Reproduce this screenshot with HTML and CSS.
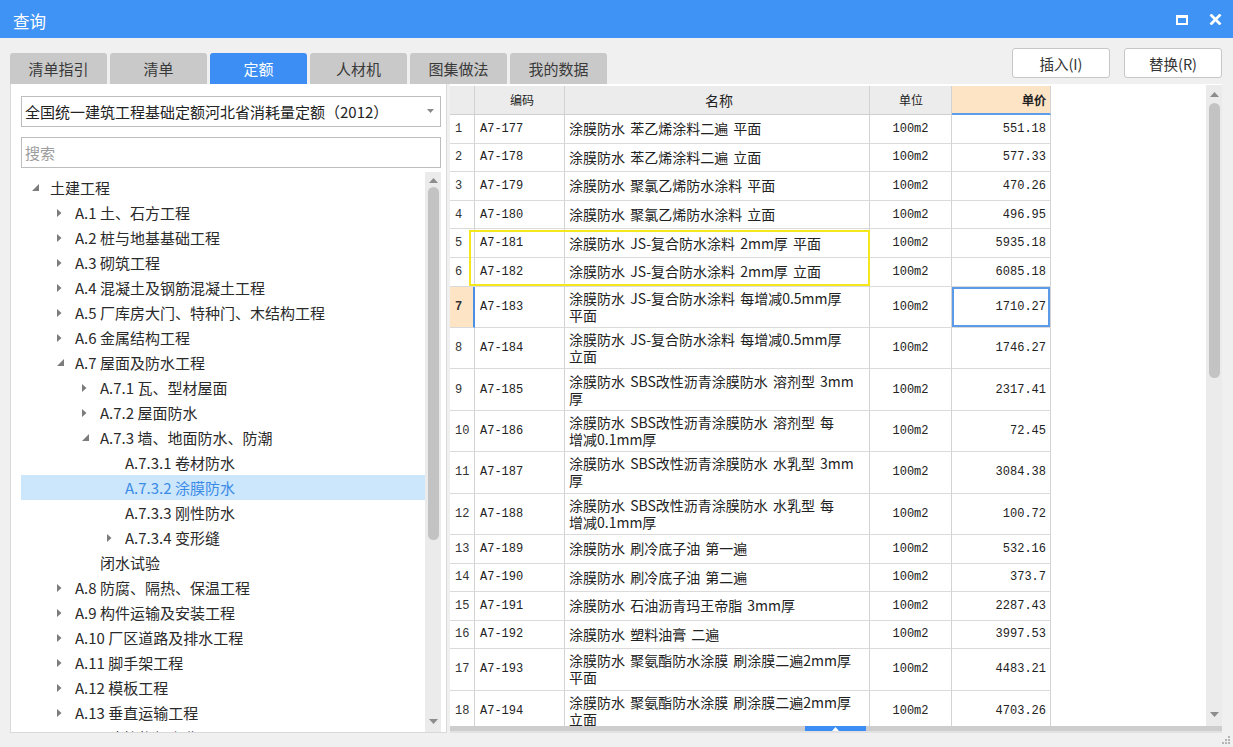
FILE: index.html
```html
<!DOCTYPE html>
<html lang="zh-CN">
<head>
<meta charset="utf-8">
<title>查询</title>
<link rel="stylesheet" href="styles.css">
</head>
<body>
<div class="window">
  <div class="titlebar">
    <span class="title">查询</span>
    <div class="win-btns">
      <svg class="win-max" width="12" height="10" viewBox="0 0 12 10"><rect x="1" y="1.5" width="10" height="7.5" fill="none" stroke="#fff" stroke-width="2"/><rect x="0" y="0" width="12" height="3" fill="#fff"/></svg>
      <svg class="win-close" width="13" height="11" viewBox="0 0 13 11"><path d="M1.5 0.5 L11.5 10.5 M11.5 0.5 L1.5 10.5" stroke="#fff" stroke-width="2.8" fill="none"/></svg>
    </div>
  </div>

  <div class="toolbar">
    <div class="tabs">
      <div class="tab">清单指引</div>
      <div class="tab">清单</div>
      <div class="tab active">定额</div>
      <div class="tab">人材机</div>
      <div class="tab">图集做法</div>
      <div class="tab">我的数据</div>
    </div>
    <div class="actions">
      <button class="btn">插入(I)</button>
      <button class="btn">替换(R)</button>
    </div>
  </div>

  <div class="main">
    <div class="left">
      <div class="select">
        <span class="select-text">全国统一建筑工程基础定额河北省消耗量定额（2012）</span>
        <svg class="caret" width="7" height="4" viewBox="0 0 7 4"><path d="M0 0 L7 0 L3.5 4Z" fill="#8a8a8a"/></svg>
      </div>
      <div class="search">搜索</div>
      <div class="tree-wrap">
        <div class="tree">
          <div class="node l0"><span class="tw"><svg width="7" height="7" viewBox="0 0 7 7"><path d="M7 0 L7 7 L0 7Z" fill="#7c7c7c"/></svg></span>土建工程</div>
          <div class="node l1"><span class="tw"><svg width="5" height="8" viewBox="0 0 5 8"><path d="M0 0 L4.5 4 L0 8Z" fill="#7c7c7c"/></svg></span>A.1 土、石方工程</div>
          <div class="node l1"><span class="tw"><svg width="5" height="8" viewBox="0 0 5 8"><path d="M0 0 L4.5 4 L0 8Z" fill="#7c7c7c"/></svg></span>A.2 桩与地基基础工程</div>
          <div class="node l1"><span class="tw"><svg width="5" height="8" viewBox="0 0 5 8"><path d="M0 0 L4.5 4 L0 8Z" fill="#7c7c7c"/></svg></span>A.3 砌筑工程</div>
          <div class="node l1"><span class="tw"><svg width="5" height="8" viewBox="0 0 5 8"><path d="M0 0 L4.5 4 L0 8Z" fill="#7c7c7c"/></svg></span>A.4 混凝土及钢筋混凝土工程</div>
          <div class="node l1"><span class="tw"><svg width="5" height="8" viewBox="0 0 5 8"><path d="M0 0 L4.5 4 L0 8Z" fill="#7c7c7c"/></svg></span>A.5 厂库房大门、特种门、木结构工程</div>
          <div class="node l1"><span class="tw"><svg width="5" height="8" viewBox="0 0 5 8"><path d="M0 0 L4.5 4 L0 8Z" fill="#7c7c7c"/></svg></span>A.6 金属结构工程</div>
          <div class="node l1"><span class="tw"><svg width="7" height="7" viewBox="0 0 7 7"><path d="M7 0 L7 7 L0 7Z" fill="#7c7c7c"/></svg></span>A.7 屋面及防水工程</div>
          <div class="node l2"><span class="tw"><svg width="5" height="8" viewBox="0 0 5 8"><path d="M0 0 L4.5 4 L0 8Z" fill="#7c7c7c"/></svg></span>A.7.1 瓦、型材屋面</div>
          <div class="node l2"><span class="tw"><svg width="5" height="8" viewBox="0 0 5 8"><path d="M0 0 L4.5 4 L0 8Z" fill="#7c7c7c"/></svg></span>A.7.2 屋面防水</div>
          <div class="node l2"><span class="tw"><svg width="7" height="7" viewBox="0 0 7 7"><path d="M7 0 L7 7 L0 7Z" fill="#7c7c7c"/></svg></span>A.7.3 墙、地面防水、防潮</div>
          <div class="node l3"><span class="tw"></span>A.7.3.1 卷材防水</div>
          <div class="node l3 selected"><span class="tw"></span>A.7.3.2 涂膜防水</div>
          <div class="node l3"><span class="tw"></span>A.7.3.3 刚性防水</div>
          <div class="node l3"><span class="tw"><svg width="5" height="8" viewBox="0 0 5 8"><path d="M0 0 L4.5 4 L0 8Z" fill="#7c7c7c"/></svg></span>A.7.3.4 变形缝</div>
          <div class="node l2"><span class="tw"></span>闭水试验</div>
          <div class="node l1"><span class="tw"><svg width="5" height="8" viewBox="0 0 5 8"><path d="M0 0 L4.5 4 L0 8Z" fill="#7c7c7c"/></svg></span>A.8 防腐、隔热、保温工程</div>
          <div class="node l1"><span class="tw"><svg width="5" height="8" viewBox="0 0 5 8"><path d="M0 0 L4.5 4 L0 8Z" fill="#7c7c7c"/></svg></span>A.9 构件运输及安装工程</div>
          <div class="node l1"><span class="tw"><svg width="5" height="8" viewBox="0 0 5 8"><path d="M0 0 L4.5 4 L0 8Z" fill="#7c7c7c"/></svg></span>A.10 厂区道路及排水工程</div>
          <div class="node l1"><span class="tw"><svg width="5" height="8" viewBox="0 0 5 8"><path d="M0 0 L4.5 4 L0 8Z" fill="#7c7c7c"/></svg></span>A.11 脚手架工程</div>
          <div class="node l1"><span class="tw"><svg width="5" height="8" viewBox="0 0 5 8"><path d="M0 0 L4.5 4 L0 8Z" fill="#7c7c7c"/></svg></span>A.12 模板工程</div>
          <div class="node l1"><span class="tw"><svg width="5" height="8" viewBox="0 0 5 8"><path d="M0 0 L4.5 4 L0 8Z" fill="#7c7c7c"/></svg></span>A.13 垂直运输工程</div>
          <div class="node l1"><span class="tw"><svg width="5" height="8" viewBox="0 0 5 8"><path d="M0 0 L4.5 4 L0 8Z" fill="#7c7c7c"/></svg></span>A.14 建筑物超高费</div>
        </div>
        <div class="vscroll tree-vs">
          <div class="arrow"><svg width="9" height="5" viewBox="0 0 9 5"><path d="M0 5 L4.5 0 L9 5Z" fill="#8c8c8c"/></svg></div>
          <div class="thumb"></div>
          <div class="spacer"></div>
          <div class="arrow"><svg width="9" height="5" viewBox="0 0 9 5"><path d="M0 0 L9 0 L4.5 5Z" fill="#8c8c8c"/></svg></div>
        </div>
      </div>
    </div>

    <div class="right">
      <div class="grid-area">
        <div class="grid">
          <div class="row head">
            <div class="c num"></div>
            <div class="c code">编码</div>
            <div class="c name">名称</div>
            <div class="c unit">单位</div>
            <div class="c price">单价</div>
          </div>
          <div class="row r1"><div class="c num">1</div><div class="c code">A7-177</div><div class="c name">涂膜防水 苯乙烯涂料二遍 平面</div><div class="c unit">100m2</div><div class="c price">551.18</div></div>
          <div class="row r1"><div class="c num">2</div><div class="c code">A7-178</div><div class="c name">涂膜防水 苯乙烯涂料二遍 立面</div><div class="c unit">100m2</div><div class="c price">577.33</div></div>
          <div class="row r1"><div class="c num">3</div><div class="c code">A7-179</div><div class="c name">涂膜防水 聚氯乙烯防水涂料 平面</div><div class="c unit">100m2</div><div class="c price">470.26</div></div>
          <div class="row r1"><div class="c num">4</div><div class="c code">A7-180</div><div class="c name">涂膜防水 聚氯乙烯防水涂料 立面</div><div class="c unit">100m2</div><div class="c price">496.95</div></div>
          <div class="row r1"><div class="c num">5</div><div class="c code">A7-181</div><div class="c name">涂膜防水 JS-复合防水涂料 2mm厚 平面</div><div class="c unit">100m2</div><div class="c price">5935.18</div></div>
          <div class="row r1"><div class="c num">6</div><div class="c code">A7-182</div><div class="c name">涂膜防水 JS-复合防水涂料 2mm厚 立面</div><div class="c unit">100m2</div><div class="c price">6085.18</div></div>
          <div class="row r2 current"><div class="c num">7</div><div class="c code">A7-183</div><div class="c name">涂膜防水 JS-复合防水涂料 每增减0.5mm厚<br>平面</div><div class="c unit">100m2</div><div class="c price focus">1710.27</div></div>
          <div class="row r2"><div class="c num">8</div><div class="c code">A7-184</div><div class="c name">涂膜防水 JS-复合防水涂料 每增减0.5mm厚<br>立面</div><div class="c unit">100m2</div><div class="c price">1746.27</div></div>
          <div class="row r2"><div class="c num">9</div><div class="c code">A7-185</div><div class="c name">涂膜防水 SBS改性沥青涂膜防水 溶剂型 3mm<br>厚</div><div class="c unit">100m2</div><div class="c price">2317.41</div></div>
          <div class="row r2"><div class="c num">10</div><div class="c code">A7-186</div><div class="c name">涂膜防水 SBS改性沥青涂膜防水 溶剂型 每<br>增减0.1mm厚</div><div class="c unit">100m2</div><div class="c price">72.45</div></div>
          <div class="row r2"><div class="c num">11</div><div class="c code">A7-187</div><div class="c name">涂膜防水 SBS改性沥青涂膜防水 水乳型 3mm<br>厚</div><div class="c unit">100m2</div><div class="c price">3084.38</div></div>
          <div class="row r2"><div class="c num">12</div><div class="c code">A7-188</div><div class="c name">涂膜防水 SBS改性沥青涂膜防水 水乳型 每<br>增减0.1mm厚</div><div class="c unit">100m2</div><div class="c price">100.72</div></div>
          <div class="row r1"><div class="c num">13</div><div class="c code">A7-189</div><div class="c name">涂膜防水 刷冷底子油 第一遍</div><div class="c unit">100m2</div><div class="c price">532.16</div></div>
          <div class="row r1"><div class="c num">14</div><div class="c code">A7-190</div><div class="c name">涂膜防水 刷冷底子油 第二遍</div><div class="c unit">100m2</div><div class="c price">373.7</div></div>
          <div class="row r1"><div class="c num">15</div><div class="c code">A7-191</div><div class="c name">涂膜防水 石油沥青玛王帝脂 3mm厚</div><div class="c unit">100m2</div><div class="c price">2287.43</div></div>
          <div class="row r1"><div class="c num">16</div><div class="c code">A7-192</div><div class="c name">涂膜防水 塑料油膏 二遍</div><div class="c unit">100m2</div><div class="c price">3997.53</div></div>
          <div class="row r2"><div class="c num">17</div><div class="c code">A7-193</div><div class="c name">涂膜防水 聚氨酯防水涂膜 刷涂膜二遍2mm厚<br>平面</div><div class="c unit">100m2</div><div class="c price">4483.21</div></div>
          <div class="row r2"><div class="c num">18</div><div class="c code">A7-194</div><div class="c name">涂膜防水 聚氨酯防水涂膜 刷涂膜二遍2mm厚<br>立面</div><div class="c unit">100m2</div><div class="c price">4703.26</div></div>
          <div class="mark"></div>
        </div>
        <div class="vscroll grid-vs">
          <div class="arrow"><svg width="9" height="5" viewBox="0 0 9 5"><path d="M0 5 L4.5 0 L9 5Z" fill="#8c8c8c"/></svg></div>
          <div class="thumb"></div>
          <div class="spacer"></div>
          <div class="arrow"><svg width="9" height="5" viewBox="0 0 9 5"><path d="M0 0 L9 0 L4.5 5Z" fill="#8c8c8c"/></svg></div>
        </div>
      </div>
      <div class="hbar"><div class="splitter"><svg width="7" height="4" viewBox="0 0 7 4"><path d="M0 4 L3.5 0 L7 4Z" fill="#fff"/></svg></div></div>
    </div>
  </div>

  <div class="statusbar">
    <svg class="grip" width="10" height="10" viewBox="0 0 10 10"><g fill="#b4b4b4"><rect x="7" y="1" width="2" height="2"/><rect x="4" y="4" width="2" height="2"/><rect x="7" y="4" width="2" height="2"/><rect x="1" y="7" width="2" height="2"/><rect x="4" y="7" width="2" height="2"/><rect x="7" y="7" width="2" height="2"/></g></svg>
  </div>
</div>
</body>
</html>
```

FILE: styles.css
```css
* { box-sizing: border-box; }
html, body {
  margin: 0;
  padding: 0;
}
body {
  width: 1233px;
  height: 747px;
  overflow: hidden;
  background: #f0f0f0;
  font-family: "Noto Sans CJK SC", "Noto Sans", sans-serif;
  color: #333;
}
.window {
  display: flex;
  flex-direction: column;
  height: 747px;
}

/* title bar */
.titlebar {
  height: 38px;
  flex: none;
  background: #3f93f5;
  display: flex;
  align-items: center;
  padding: 4px 11px 0 13px;
  color: #fff;
}
.title {
  flex: 1;
  font-size: 16.5px;
  line-height: 1;
}
.win-btns {
  display: flex;
  align-items: center;
  gap: 21px;
  margin-top: -3px;
}

/* tabs + actions */
.toolbar {
  height: 46px;
  flex: none;
  display: flex;
  align-items: flex-end;
  padding: 0 11px 0 10px;
}
.tabs {
  display: flex;
  gap: 3px;
}
.tab {
  width: 97px;
  height: 31px;
  background: #c9c9c9;
  border-radius: 3px 3px 0 0;
  display: flex;
  align-items: center;
  justify-content: center;
  font-size: 15px;
  color: #3a3a3a;
}
.tab.active {
  background: #3c8ef4;
  color: #fff;
}
.actions {
  margin-left: auto;
  align-self: flex-start;
  margin-top: 10px;
  display: flex;
  gap: 14px;
}
.btn {
  width: 98px;
  height: 30px;
  background: #fff;
  border: 1px solid #c6c6c6;
  border-radius: 3px;
  font-family: inherit;
  font-size: 14.5px;
  color: #333;
  padding: 0;
}

/* main area */
.main {
  height: 649px;
  flex: none;
  display: flex;
  gap: 3px;
  margin: 0 11px 0 10px;
}
.left {
  width: 437px;
  flex: none;
  background: #fff;
  border: 1px solid #d9d9d9;
  border-top: none;
  padding: 12px 5px 0 10px;
  display: flex;
  flex-direction: column;
}
.select, .search {
  height: 31px;
  flex: none;
  border: 1px solid #bdbdbd;
  display: flex;
  align-items: center;
  padding: 0 6px 0 3px;
  font-size: 15px;
}
.select-text {
  flex: 1;
  color: #222;
  white-space: nowrap;
}
.caret { margin-bottom: 1px; }
.search {
  margin-top: 10px;
  color: #9c9c9c;
}
.tree-wrap {
  margin-top: 4px;
  flex: 1;
  min-height: 0;
  display: flex;
  overflow: hidden;
}
.tree {
  flex: 1;
  padding-top: 3px;
  overflow: hidden;
}
.node {
  height: 25px;
  display: flex;
  align-items: center;
  font-size: 15px;
  color: #2a2a2a;
  white-space: nowrap;
}
.node.l0 { padding-left: 11px; }
.node.l1 { padding-left: 36px; }
.node.l2 { padding-left: 61px; }
.node.l3 { padding-left: 86px; }
.node.selected {
  background: #cce6fc;
  color: #3b8be6;
}
.tw {
  width: 18px;
  flex: none;
  display: flex;
  align-items: center;
}

/* scrollbars */
.vscroll {
  width: 16px;
  flex: none;
  background: #ebebeb;
  display: flex;
  flex-direction: column;
  align-items: center;
}
.vscroll .arrow {
  height: 14px;
  display: flex;
  align-items: center;
  justify-content: center;
  flex: none;
}
.vscroll .thumb {
  width: 11px;
  background: #c3c3c3;
  border-radius: 6px;
  flex: none;
}
.vscroll .spacer { flex: 1; }
.tree-vs { padding: 1px 0 4px; }
.tree-vs .thumb { height: 353px; }
.grid-vs { padding: 1px 0 4px; }
.grid-vs .arrow { height: 16px; }
.grid-vs .thumb { height: 275px; margin-top: 1px; }

/* grid */
.right {
  flex: 1;
  background: #fff;
  display: flex;
  flex-direction: column;
  padding-top: 1px;
}
.grid-area {
  flex: 1;
  min-height: 0;
  display: flex;
}
.grid {
  flex: 1;
  position: relative;
  overflow: hidden;
  padding-top: 1px;
}
.row {
  display: grid;
  grid-template-columns: 25px 90px 305px 82px 99px;
}
.row.r1 { height: 28.6px; }
.row.r2 { height: 41.4px; }
.row.head { height: 29px; }
.c {
  border-right: 1px solid #d3d3d3;
  border-bottom: 1px solid #dadada;
  display: flex;
  align-items: center;
  white-space: nowrap;
  overflow: hidden;
}
.head .c {
  background: #ececec;
  justify-content: center;
  font-size: 14.5px;
  color: #222;
  border-bottom-color: #cfcfcf;
}
.head .c.price {
  background: #fde4c5;
  font-weight: bold;
  border-bottom: 2px solid #5d9de9;
}
.c.num {
  font-family: "Liberation Mono", monospace;
  font-size: 12px;
  padding-left: 5px;
  color: #333;
}
.head .c.num { padding: 0; }
.c.code {
  font-family: "Liberation Mono", monospace;
  font-size: 12px;
  padding-left: 5px;
  color: #222;
}
.c.name {
  font-size: 14px;
  line-height: 17px;
  padding-left: 4px;
  color: #222;
  word-spacing: 2px;
}
.c.unit {
  font-family: "Liberation Mono", monospace;
  font-size: 12px;
  justify-content: center;
  color: #222;
}
.c.price {
  font-family: "Liberation Mono", monospace;
  font-size: 12px;
  justify-content: flex-end;
  padding-right: 4px;
  color: #222;
}
.current .c.num {
  background: #fde4c5;
  font-weight: bold;
  border-right: 2px solid #4a8fe6;
}
.c.focus {
  box-shadow: inset 0 0 0 2px #5a9ae8;
}
.mark {
  position: absolute;
  left: 19px;
  top: 145px;
  width: 401px;
  height: 56px;
  border: 2px solid #f4e81c;
  pointer-events: none;
}

.hbar {
  height: 7px;
  flex: none;
  background: #cdcdcd;
  border-bottom: 2px solid #e2e2e2;
  display: flex;
}
.splitter {
  margin-left: 355px;
  width: 61px;
  background: #3c8ef4;
  display: flex;
  justify-content: center;
  align-items: center;
}

.statusbar {
  flex: 1;
  display: flex;
  justify-content: flex-end;
  align-items: flex-end;
  padding: 0 2px 2px 0;
}
```
